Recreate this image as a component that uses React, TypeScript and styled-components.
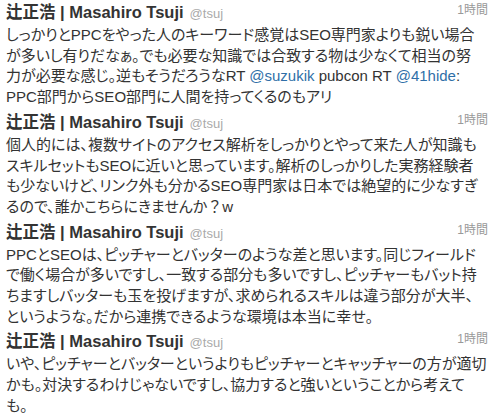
import React from 'react';
import styled, { createGlobalStyle } from 'styled-components';

const Global = createGlobalStyle`
  body {
    margin: 0;
    background: #fff;
    font-family: "Liberation Sans", "Noto Sans CJK JP", sans-serif;
    color: #333;
  }
`;

const List = styled.div`
  width: 500px;
  display: flex;
  flex-direction: column;
  gap: 3px;
  padding: 1px 0 0;
`;

const Tweet = styled.div`
  padding: 0 12px 0 6px;
`;

const Head = styled.div`
  display: flex;
  align-items: flex-start;
  justify-content: space-between;
  height: 24px;
`;

const Name = styled.div`
  font-size: 16.5px;
  font-weight: bold;
  color: #333;
  line-height: 22px;
  white-space: nowrap;
`;

const Handle = styled.span`
  font-size: 13px;
  font-weight: normal;
  color: #aaa;
  margin-left: 6px;
`;

const Time = styled.span`
  font-size: 12px;
  color: #999;
  line-height: 16px;
  margin-top: 1px;
`;

const Body = styled.div`
  font-size: 15px;
  line-height: 20.7px;
  color: #333;
  font-feature-settings: "palt";
`;

const Line = styled.div`
  white-space: nowrap;
`;

const Link = styled.span`
  color: #2f6fa8;
`;

const Wide = styled.span`
  font-feature-settings: normal;
`;

type Item = { time: string; lines: React.ReactNode[] };

const items: Item[] = [
  {
    time: '1時間',
    lines: [
      'しっかりとPPCをやった人のキーワード感覚はSEO専門家よりも鋭い場合',
      'が多いし有りだなぁ。でも必要な知識では合致する物は少なくて相当の努',
      <>
        力が必要な感じ。逆もそうだろうなRT <Link>@suzukik</Link> pubcon RT <Link>@41hide</Link>:
      </>,
      'PPC部門からSEO部門に人間を持ってくるのもアリ',
    ],
  },
  {
    time: '1時間',
    lines: [
      '個人的には、複数サイトのアクセス解析をしっかりとやって来た人が知識も',
      'スキルセットもSEOに近いと思っています。解析のしっかりした実務経験者',
      'も少ないけど、リンク外も分かるSEO専門家は日本では絶望的に少なすぎ',
      <>
        るので、誰かこちらにきませんか<Wide>？</Wide>w
      </>,
    ],
  },
  {
    time: '1時間',
    lines: [
      'PPCとSEOは、ピッチャーとバッターのような差と思います。同じフィールド',
      'で働く場合が多いですし、一致する部分も多いですし、ピッチャーもバット持',
      'ちますしバッターも玉を投げますが、求められるスキルは違う部分が大半、',
      'というような。だから連携できるような環境は本当に幸せ。',
    ],
  },
  {
    time: '1時間',
    lines: [
      'いや、ピッチャーとバッターというよりもピッチャーとキャッチャーの方が適切',
      'かも。対決するわけじゃないですし、協力すると強いということから考えて',
      'も。',
    ],
  },
];

const App = () => {
  return (
    <>
      <Global />
      <List>
        {items.map((t, i) => (
          <Tweet key={i}>
            <Head>
              <Name>
                辻正浩 | Masahiro Tsuji<Handle>@tsuj</Handle>
              </Name>
              <Time>{t.time}</Time>
            </Head>
            <Body>
              {t.lines.map((l, j) => (
                <Line key={j}>{l}</Line>
              ))}
            </Body>
          </Tweet>
        ))}
      </List>
    </>
  );
};

export default App;
